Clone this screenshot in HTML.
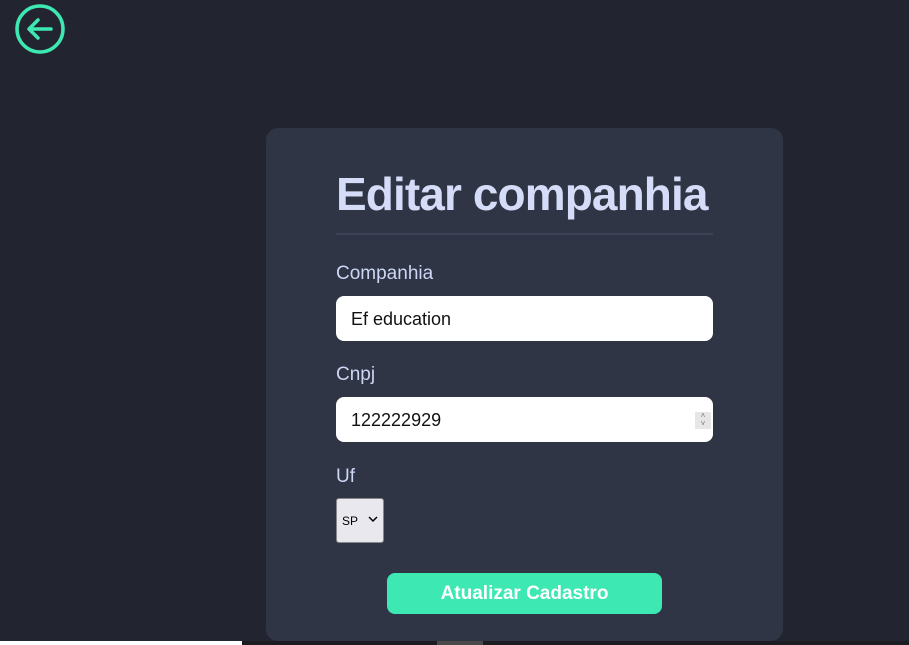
<!DOCTYPE html>
<html><head><meta charset="utf-8"><style>
*{margin:0;padding:0;box-sizing:border-box}
body{width:909px;height:645px;background:#22252f;font-family:"Liberation Sans",sans-serif;position:relative;overflow:hidden}
.back{position:absolute;left:14px;top:3px}
.card{position:absolute;left:266px;top:128px;width:517px;height:513px;background:#2f3544;border-radius:12px}
h1{position:absolute;left:70px;top:39px;font-size:46px;font-weight:bold;color:#d4dcf7;letter-spacing:-0.9px;white-space:nowrap}
.hr{position:absolute;left:70px;top:105px;width:377px;height:2px;background:#3d4356}
.lbl{position:absolute;left:70px;font-size:19px;color:#cdd6f4}
.inp{position:absolute;left:70px;width:377px;height:45px;background:#fff;border-radius:8px;font-size:18px;color:#111;padding:13px 15px}
.spin{position:absolute;right:2px;top:15px;width:16px;height:17px;background:#e6e6e6;font-size:8px;color:#777;text-align:center;line-height:8px}
.sel{position:absolute;left:70px;top:370px;width:48px;height:45px;background:#e9e8ee;border:1px solid #888;border-radius:3px;font-size:12px;color:#000;padding:15px 0 0 5px}
.chev{position:absolute;left:31px;top:16px}
.btn{position:absolute;left:121px;top:445px;width:275px;height:41px;background:#3ee8b2;border-radius:8px;color:#fff;font-weight:bold;font-size:19px;text-align:center;line-height:41px}
.strip{position:absolute;top:641px;height:4px}
</style></head><body>
<svg class="back" width="52" height="52" viewBox="0 0 52 52"><circle cx="26" cy="26" r="23" fill="none" stroke="#3ee8b2" stroke-width="3.5"/><path d="M37 26H15M24 17L15 26L24 35" fill="none" stroke="#3ee8b2" stroke-width="3.5" stroke-linecap="round" stroke-linejoin="round"/></svg>
<div class="card">
<h1>Editar companhia</h1>
<div class="hr"></div>
<div class="lbl" style="top:135px">Companhia</div>
<div class="inp" style="top:168px">Ef education</div>
<div class="lbl" style="top:236px">Cnpj</div>
<div class="inp" style="top:269px">122222929<div class="spin">˄<br>˅</div></div>
<div class="lbl" style="top:338px">Uf</div>
<div class="sel">SP<svg class="chev" width="10" height="8" viewBox="0 0 10 8"><path d="M1 2L5 6L9 2" fill="none" stroke="#000" stroke-width="1.5"/></svg></div>
<div class="btn">Atualizar Cadastro</div>
</div>
<div class="strip" style="left:0;width:242px;background:#fff"></div>
<div class="strip" style="left:242px;width:667px;background:#1c1d22"></div>
<div class="strip" style="left:437px;width:46px;background:#4a4a4a"></div>
</body></html>
